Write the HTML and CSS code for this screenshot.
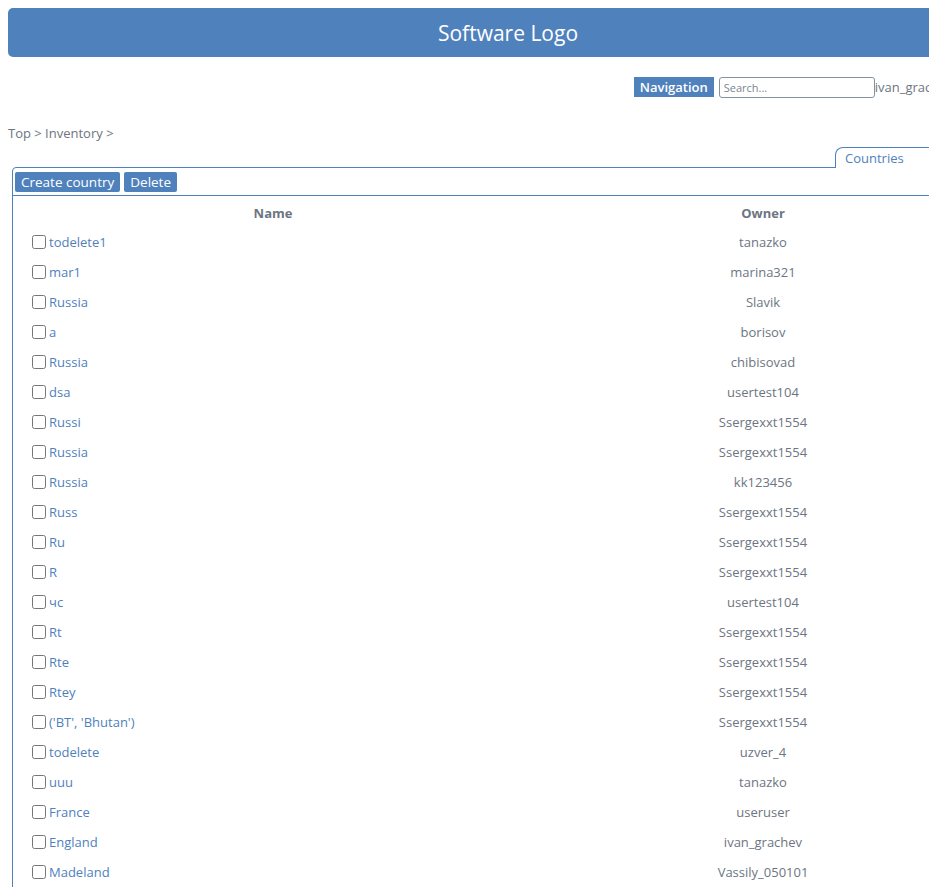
FILE: index.html
```html
<!DOCTYPE html>
<html>
<head>
<meta charset="utf-8">
<title>Countries</title>
<link rel="stylesheet" href="styles.css">
</head>
<body>
<div class="page">
  <header class="banner">Software Logo</header>
  <div class="navrow">
    <span class="navbtn">Navigation</span>
    <input class="search" type="text" placeholder="Search...">
    <span class="user">ivan_grachev</span>
  </div>
  <div class="crumbs">Top &gt; Inventory &gt;</div>
  <div class="tabs"><span class="tab">Countries</span></div>
  <div class="panel">
    <div class="toolbar">
      <button class="btn">Create country</button>
      <button class="btn">Delete</button>
    </div>
    <table class="grid">
      <thead>
        <tr><th class="c-name">Name</th><th class="c-owner">Owner</th></tr>
      </thead>
      <tbody>
        <tr><td class="c-name"><input type="checkbox"><a href="#">todelete1</a></td><td class="c-owner">tanazko</td></tr>
        <tr><td class="c-name"><input type="checkbox"><a href="#">mar1</a></td><td class="c-owner">marina321</td></tr>
        <tr><td class="c-name"><input type="checkbox"><a href="#">Russia</a></td><td class="c-owner">Slavik</td></tr>
        <tr><td class="c-name"><input type="checkbox"><a href="#">a</a></td><td class="c-owner">borisov</td></tr>
        <tr><td class="c-name"><input type="checkbox"><a href="#">Russia</a></td><td class="c-owner">chibisovad</td></tr>
        <tr><td class="c-name"><input type="checkbox"><a href="#">dsa</a></td><td class="c-owner">usertest104</td></tr>
        <tr><td class="c-name"><input type="checkbox"><a href="#">Russi</a></td><td class="c-owner">Ssergexxt1554</td></tr>
        <tr><td class="c-name"><input type="checkbox"><a href="#">Russia</a></td><td class="c-owner">Ssergexxt1554</td></tr>
        <tr><td class="c-name"><input type="checkbox"><a href="#">Russia</a></td><td class="c-owner">kk123456</td></tr>
        <tr><td class="c-name"><input type="checkbox"><a href="#">Russ</a></td><td class="c-owner">Ssergexxt1554</td></tr>
        <tr><td class="c-name"><input type="checkbox"><a href="#">Ru</a></td><td class="c-owner">Ssergexxt1554</td></tr>
        <tr><td class="c-name"><input type="checkbox"><a href="#">R</a></td><td class="c-owner">Ssergexxt1554</td></tr>
        <tr><td class="c-name"><input type="checkbox"><a href="#">чс</a></td><td class="c-owner">usertest104</td></tr>
        <tr><td class="c-name"><input type="checkbox"><a href="#">Rt</a></td><td class="c-owner">Ssergexxt1554</td></tr>
        <tr><td class="c-name"><input type="checkbox"><a href="#">Rte</a></td><td class="c-owner">Ssergexxt1554</td></tr>
        <tr><td class="c-name"><input type="checkbox"><a href="#">Rtey</a></td><td class="c-owner">Ssergexxt1554</td></tr>
        <tr><td class="c-name"><input type="checkbox"><a href="#">('BT', 'Bhutan')</a></td><td class="c-owner">Ssergexxt1554</td></tr>
        <tr><td class="c-name"><input type="checkbox"><a href="#">todelete</a></td><td class="c-owner">uzver_4</td></tr>
        <tr><td class="c-name"><input type="checkbox"><a href="#">uuu</a></td><td class="c-owner">tanazko</td></tr>
        <tr><td class="c-name"><input type="checkbox"><a href="#">France</a></td><td class="c-owner">useruser</td></tr>
        <tr><td class="c-name"><input type="checkbox"><a href="#">England</a></td><td class="c-owner">ivan_grachev</td></tr>
        <tr><td class="c-name"><input type="checkbox"><a href="#">Madeland</a></td><td class="c-owner">Vassily_050101</td></tr>
        <tr><td class="c-name"><input type="checkbox"><a href="#">Russia</a></td><td class="c-owner">Ssergexxt1554</td></tr>
        <tr><td class="c-name"><input type="checkbox"><a href="#">Germany</a></td><td class="c-owner">usertest104</td></tr>
        <tr><td class="c-name"><input type="checkbox"><a href="#">Spain</a></td><td class="c-owner">tanazko</td></tr>
        <tr><td class="c-name"><input type="checkbox"><a href="#">Italy</a></td><td class="c-owner">marina321</td></tr>
        <tr><td class="c-name"><input type="checkbox"><a href="#">Poland</a></td><td class="c-owner">borisov</td></tr>
        <tr><td class="c-name"><input type="checkbox"><a href="#">Norway</a></td><td class="c-owner">chibisovad</td></tr>
        <tr><td class="c-name"><input type="checkbox"><a href="#">Sweden</a></td><td class="c-owner">useruser</td></tr>
        <tr><td class="c-name"><input type="checkbox"><a href="#">Finland</a></td><td class="c-owner">kk123456</td></tr>
      </tbody>
    </table>
  </div>
</div>
</body>
</html>
```

FILE: styles.css
```css
html, body {
  margin: 0;
  padding: 0;
}
body {
  background: #ffffff;
  font-family: "Open Sans", "Noto Sans", sans-serif;
  font-size: 13px;
  color: #6d7582;
}
.page {
  width: 1000px;
  padding: 8px;
}
.banner {
  height: 49px;
  background: #4f81bd;
  border-radius: 5px;
  color: #ffffff;
  font-size: 21px;
  display: flex;
  align-items: center;
  justify-content: center;
}
.navrow {
  display: flex;
  align-items: center;
  justify-content: flex-end;
  margin-top: 19px;
  height: 22px;
  padding-right: 55px;
}
.navbtn {
  background: #4f81bd;
  color: #ffffff;
  font-weight: 600;
  font-size: 13px;
  height: 20px;
  line-height: 20px;
  padding: 0 6px;
}
.search {
  box-sizing: border-box;
  width: 156px;
  height: 21px;
  margin-left: 5px;
  border: 1px solid #8592a3;
  border-radius: 3px;
  font-family: "Open Sans", "Noto Sans", sans-serif;
  font-size: 11px;
  padding: 0 4px;
  color: #555;
}
.search::placeholder {
  color: #7b8591;
}
.user {
  font-size: 13px;
  color: #6d7582;
}
.crumbs {
  margin-top: 25px;
  height: 20px;
  line-height: 20px;
  font-size: 13px;
  color: #6d7582;
}
.tabs {
  display: flex;
  justify-content: flex-start;
  padding-left: 827px;
  margin-top: 4px;
}
.tab {
  display: block;
  border: 1px solid #4f81bd;
  border-bottom: none;
  border-top-left-radius: 8px;
  padding: 0 9px;
  height: 20px;
  line-height: 20px;
  color: #4f81bd;
  font-size: 13px;
  background: #ffffff;
  position: relative;
  margin-bottom: -1px;
  width: 150px;
}
.panel {
  margin-left: 4px;
  border: 1px solid #4f81bd;
  border-top-left-radius: 4px;
  width: 990px;
}
.toolbar {
  display: flex;
  gap: 4px;
  padding: 4px 2px 3px 2px;
  border-bottom: 1px solid #4f81bd;
}
.btn {
  background: #4f81bd;
  color: #ffffff;
  border: none;
  border-radius: 2px;
  height: 20px;
  padding: 0 6px;
  font-family: "Open Sans", "Noto Sans", sans-serif;
  font-size: 13.5px;
  line-height: 20px;
}
.grid {
  width: 980px;
  border-collapse: collapse;
  margin-top: 3px;
}
.grid th {
  font-weight: 700;
  color: #6d7582;
  height: 28px;
  padding: 0;
  text-align: center;
  font-size: 13px;
}
.grid td {
  height: 30px;
  padding: 0;
  font-size: 13px;
}
.c-name {
  width: 520px;
}
.c-name input {
  margin: 0 3px 0 19px;
  width: 14px;
  height: 14px;
  vertical-align: -2px;
}
.grid td.c-name {
  text-align: left;
}
.grid td.c-owner {
  text-align: center;
  color: #6d7582;
}
.grid a {
  color: #4f81bd;
  text-decoration: none;
}
```
